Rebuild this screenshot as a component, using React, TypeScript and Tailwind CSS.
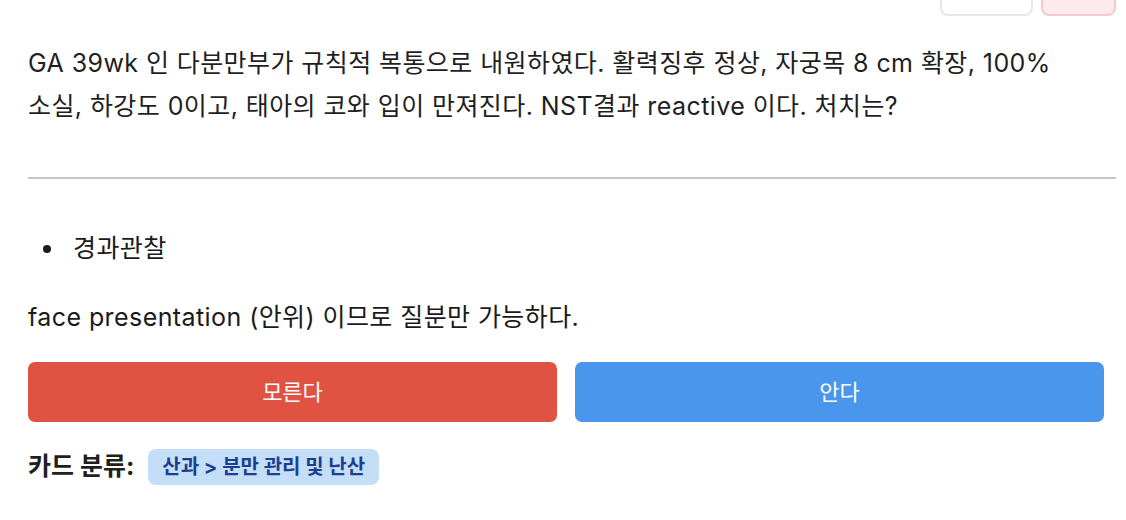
import React from "react";

export default function App() {
  const font = { fontFamily: 'Inter, "Noto Sans CJK KR", sans-serif' };
  return (
    <div className="w-[1126px] h-[520px] bg-white overflow-hidden relative text-[#1a1a1a]" style={font}>
      <div className="absolute top-[-20px] left-[940px] flex gap-[8px]">
        <div className="w-[93px] h-[36px] rounded-[8px] border-2 border-[#e3e8ef] bg-white" />
        <div className="w-[75px] h-[36px] rounded-[8px] border-2 border-[#f7c9cd] bg-[#fdeaec]" />
      </div>
      <div className="pl-[28px] pr-[10px] pt-[42px]">
        <p className="text-[25px] leading-[43px] tracking-[0.42px] text-[#1f1f1f]">
          GA 39wk 인 다분만부가 규칙적 복통으로 내원하였다. 활력징후 정상, 자궁목 8 cm 확장, 100%
          <br />
          소실, 하강도 0이고, 태아의 코와 입이 만져진다. NST결과 reactive 이다. 처치는?
        </p>
        <div className="mt-[49px] h-[2px] bg-[#c6c6c6]" />
        <ul className="mt-[48px] pl-[15px] text-[25px] leading-[43px] tracking-[0.42px]">
          <li className="flex items-center">
            <span className="w-[8px] h-[8px] rounded-full bg-[#1a1a1a] mr-[22px]" />
            <span>경과관찰</span>
          </li>
        </ul>
        <p className="mt-[26px] text-[25px] leading-[43px] tracking-[0.42px]">face presentation (안위) 이므로 질분만 가능하다.</p>
        <div className="mt-[23px] flex gap-[18px] w-[1076px]">
          <button className="flex-1 h-[60px] rounded-[7px] bg-[#e05342] text-white text-[22px]">모른다</button>
          <button className="flex-1 h-[60px] rounded-[7px] bg-[#4a96ec] text-white text-[22px]">안다</button>
        </div>
        <div className="mt-[26px] flex items-center gap-[14px]">
          <span className="text-[25px] font-bold text-[#1f1f1f]">카드 분류:</span>
          <span className="h-[36px] px-[14px] flex items-center rounded-[8px] bg-[#c5def8] text-[#1e3f8f] text-[20px] font-bold">산과 &gt; 분만 관리 및 난산</span>
        </div>
      </div>
    </div>
  );
}
